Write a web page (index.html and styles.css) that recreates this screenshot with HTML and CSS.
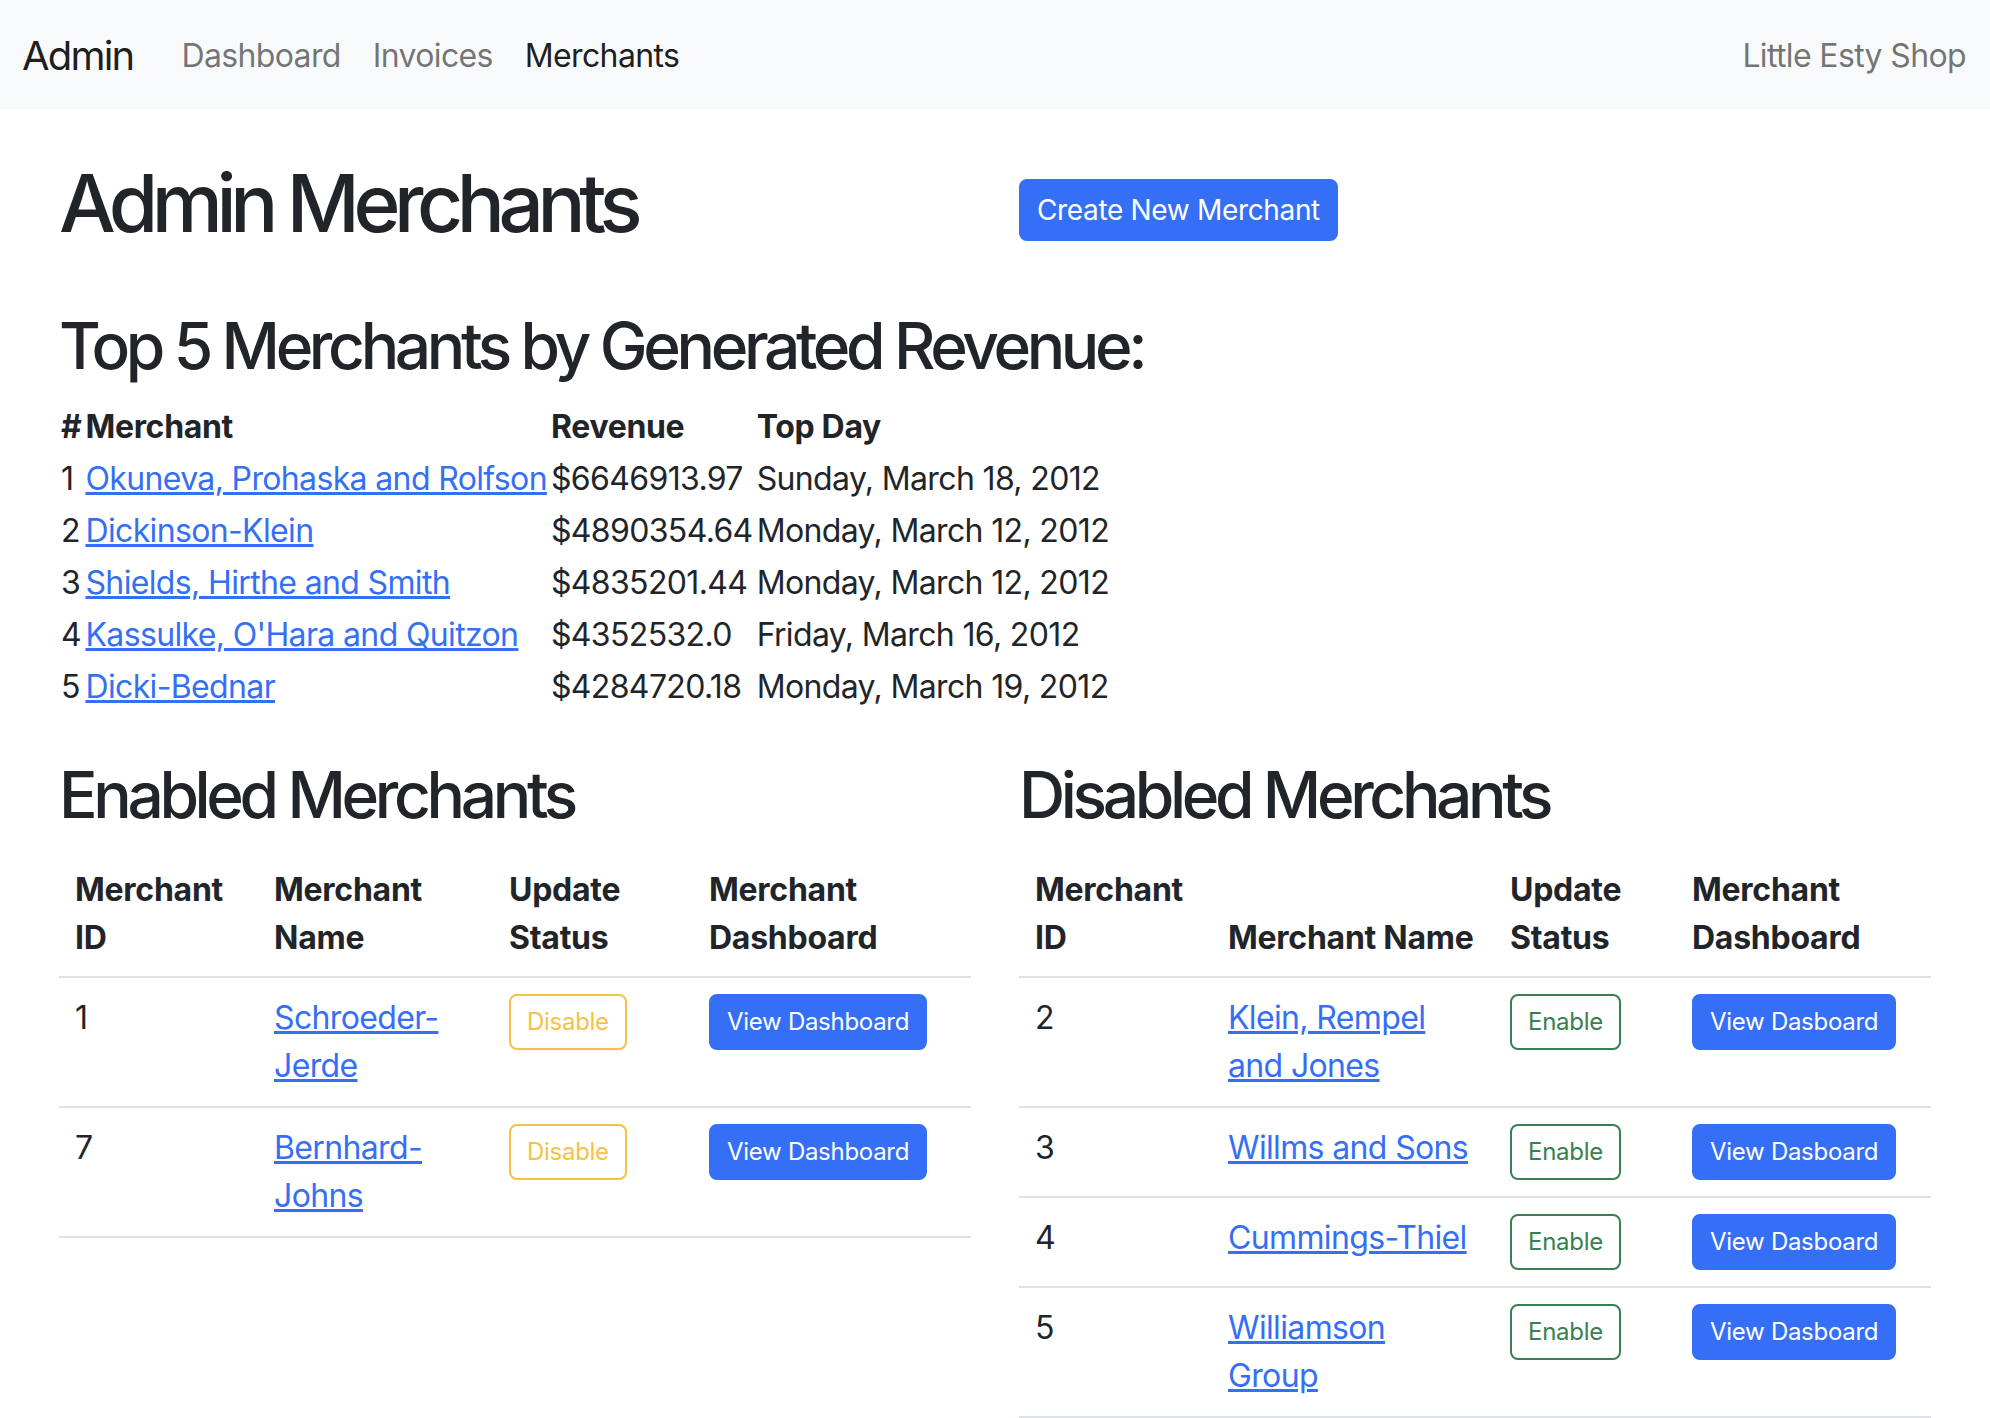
FILE: index.html
```html
<!DOCTYPE html>
<html lang="en">
<head>
<meta charset="utf-8">
<title>Little Esty Shop - Admin Merchants</title>
<link rel="stylesheet" href="styles.css">
</head>
<body>
<nav class="navbar">
  <a class="brand" href="#">Admin</a>
  <ul class="nav">
    <li><a class="nav-link" href="#">Dashboard</a></li>
    <li><a class="nav-link" href="#">Invoices</a></li>
    <li><a class="nav-link active" href="#">Merchants</a></li>
  </ul>
  <span class="navbar-text">Little Esty Shop</span>
</nav>

<main class="container">
  <div class="row">
    <div class="col">
      <h1 class="page-title">Admin Merchants</h1>
    </div>
    <div class="col">
      <a class="btn btn-primary btn-create" href="#">Create New Merchant</a>
    </div>
  </div>

  <section class="top-five">
    <h2 class="section-title">Top 5 Merchants by Generated Revenue:</h2>
    <table class="plain-table">
      <thead>
        <tr><th>#</th><th>Merchant</th><th>Revenue</th><th>Top Day</th></tr>
      </thead>
      <tbody>
        <tr><td>1</td><td><a href="#">Okuneva, Prohaska and Rolfson</a></td><td>$6646913.97</td><td>Sunday, March 18, 2012</td></tr>
        <tr><td>2</td><td><a href="#">Dickinson-Klein</a></td><td>$4890354.64</td><td>Monday, March 12, 2012</td></tr>
        <tr><td>3</td><td><a href="#">Shields, Hirthe and Smith</a></td><td>$4835201.44</td><td>Monday, March 12, 2012</td></tr>
        <tr><td>4</td><td><a href="#">Kassulke, O'Hara and Quitzon</a></td><td>$4352532.0</td><td>Friday, March 16, 2012</td></tr>
        <tr><td>5</td><td><a href="#">Dicki-Bednar</a></td><td>$4284720.18</td><td>Monday, March 19, 2012</td></tr>
      </tbody>
    </table>
  </section>

  <div class="row lists">
    <div class="col">
      <h2 class="section-title">Enabled Merchants</h2>
      <table class="table table-enabled">
        <thead>
          <tr><th class="c1">Merchant ID</th><th class="c2">Merchant Name</th><th class="c3">Update Status</th><th class="c4">Merchant Dashboard</th></tr>
        </thead>
        <tbody>
          <tr><td>1</td><td class="name"><a href="#">Schroeder-Jerde</a></td><td><button class="btn btn-xs btn-outline-warning">Disable</button></td><td><a class="btn btn-xs btn-primary" href="#">View Dashboard</a></td></tr>
          <tr><td>7</td><td class="name"><a href="#">Bernhard-Johns</a></td><td><button class="btn btn-xs btn-outline-warning">Disable</button></td><td><a class="btn btn-xs btn-primary" href="#">View Dashboard</a></td></tr>
        </tbody>
      </table>
    </div>
    <div class="col">
      <h2 class="section-title">Disabled Merchants</h2>
      <table class="table table-disabled">
        <thead>
          <tr><th class="c1">Merchant ID</th><th class="c2">Merchant Name</th><th class="c3">Update Status</th><th class="c4">Merchant Dashboard</th></tr>
        </thead>
        <tbody>
          <tr><td>2</td><td class="name"><a href="#">Klein, Rempel and Jones</a></td><td><button class="btn btn-xs btn-outline-success">Enable</button></td><td><a class="btn btn-xs btn-primary" href="#">View Dasboard</a></td></tr>
          <tr><td>3</td><td class="name"><a href="#">Willms and Sons</a></td><td><button class="btn btn-xs btn-outline-success">Enable</button></td><td><a class="btn btn-xs btn-primary" href="#">View Dasboard</a></td></tr>
          <tr><td>4</td><td class="name"><a href="#">Cummings-Thiel</a></td><td><button class="btn btn-xs btn-outline-success">Enable</button></td><td><a class="btn btn-xs btn-primary" href="#">View Dasboard</a></td></tr>
          <tr><td>5</td><td class="name"><a href="#">Williamson Group</a></td><td><button class="btn btn-xs btn-outline-success">Enable</button></td><td><a class="btn btn-xs btn-primary" href="#">View Dasboard</a></td></tr>
        </tbody>
      </table>
    </div>
  </div>
</main>
</body>
</html>
```

FILE: styles.css
```css
* { box-sizing: border-box; }

html, body {
  margin: 0;
  padding: 0;
  background: #fff;
}

body {
  font-family: Inter, "Noto Sans", "Liberation Sans", sans-serif;
  font-size: 32px;
  line-height: 1.5;
  letter-spacing: -0.02em;
  color: #212529;
}

a { color: #356ff5; text-decoration: underline; }

/* Navbar */
.navbar {
  display: flex;
  align-items: center;
  background: #f8f9fa;
  padding: 16px 24px 13px 22px;
}

.brand {
  font-size: 40px;
  line-height: 60px;
  padding: 10px 0;
  margin-right: 32px;
  letter-spacing: -0.045em;
  color: rgba(0, 0, 0, 0.9);
  text-decoration: none;
}

.nav {
  display: flex;
  list-style: none;
  margin: 0;
  padding: 0;
}

.nav-link {
  display: block;
  padding: 16px;
  color: rgba(0, 0, 0, 0.55);
  text-decoration: none;
}

.nav-link.active { color: rgba(0, 0, 0, 0.9); }

.navbar-text {
  margin-left: auto;
  color: rgba(0, 0, 0, 0.55);
}

/* Layout */
.container {
  width: 1920px;
  margin: 0 auto;
  padding: 46px 24px 0;
}

.row {
  display: grid;
  grid-template-columns: 1fr 1fr;
  column-gap: 48px;
}

.page-title {
  margin: 0 0 16px;
  font-size: 80px;
  font-weight: 500;
  line-height: 1.2;
  letter-spacing: -0.08em;
}

.section-title {
  margin: 0 0 16px;
  font-size: 64px;
  font-weight: 500;
  line-height: 1.2;
  letter-spacing: -0.068em;
}

.top-five { margin-top: 41px; }

.lists { margin-top: 44px; }

/* Buttons */
.btn {
  display: inline-block;
  font-family: inherit;
  font-weight: 400;
  text-align: center;
  text-decoration: none;
  vertical-align: middle;
  border: 2px solid transparent;
  border-radius: 8px;
  cursor: pointer;
  background: transparent;
  letter-spacing: -0.012em;
}

.btn-create {
  margin-top: 24px;
  font-size: 28px;
  line-height: 42px;
  padding: 8px 16px;
}

.btn-xs {
  font-size: 24px;
  line-height: 36px;
  padding: 8px 16px;
}

.btn-primary {
  color: #fff;
  background: #356ff5;
  border-color: #356ff5;
}

.btn-outline-warning {
  color: #f6c244;
  border-color: #f6c244;
}

.btn-outline-success {
  color: #36814f;
  border-color: #36814f;
}

/* Top five table */
.plain-table {
  border-collapse: collapse;
}

.plain-table th,
.plain-table td {
  padding: 2px;
  text-align: left;
  vertical-align: middle;
}

.plain-table th {
  font-weight: 700;
  letter-spacing: -0.01em;
}

/* Data tables */
.table {
  width: 100%;
  border-collapse: collapse;
  table-layout: fixed;
  vertical-align: top;
}

.table th,
.table td {
  padding: 16px;
  text-align: left;
  border-bottom: 2px solid #dee2e6;
}

.table thead th {
  vertical-align: bottom;
  font-weight: 700;
  letter-spacing: -0.008em;
  padding-bottom: 14px;
}

.table tbody td { vertical-align: top; }

.table-disabled td.name { padding-right: 22px; }

.table-enabled .c1 { width: 199px; }
.table-enabled .c2 { width: 235px; }
.table-enabled .c3 { width: 200px; }
.table-enabled .c4 { width: 278px; }

.table-disabled .c1 { width: 193px; }
.table-disabled .c2 { width: 282px; }
.table-disabled .c3 { width: 182px; }
.table-disabled .c4 { width: 255px; }
```
